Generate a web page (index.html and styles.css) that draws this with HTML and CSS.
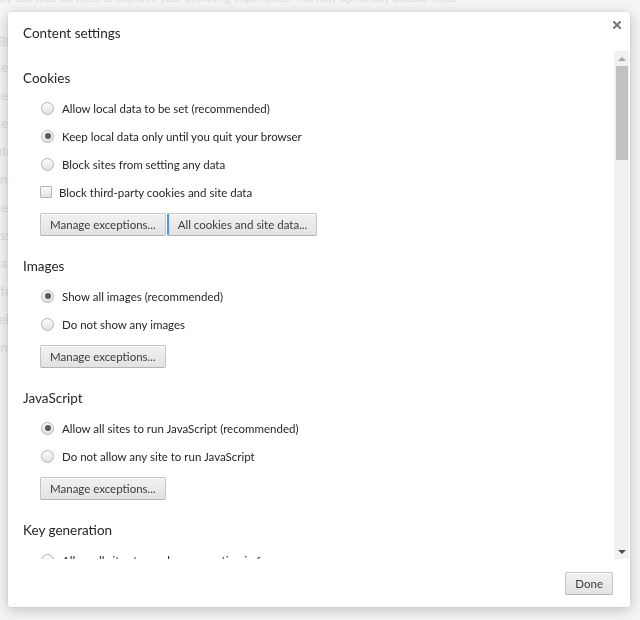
FILE: index.html
```html
<!DOCTYPE html>
<html lang="en">
<head>
  <meta charset="UTF-8" />
  <title>Content settings</title>
  <link rel="stylesheet" href="styles.css">
</head>
<body>
<!-- ========= Settings page behind the dialog ========= -->
<div class="page">
  <p class="page-top">may use web services to improve your browsing experience. You may optionally disable these</p>
  <div class="page-rows">
    <a class="page-link">Learn more</a>
    <span>Use a web service to help resolve navigation errors</span>
    <span>Use a prediction service to help complete searches</span>
    <span>Use a prediction service to load pages</span>
    <span>Automatically send some system information</span>
    <span>Send a "Do Not Track" request</span>
    <span>Use a web service to help resolve spelling errors</span>
    <span>Passwords and forms</span>
    <span>Enable Autofill to fill out web forms</span>
    <span>Offer to save your passwords</span>
    <span>Web content</span>
    <span>Font size</span>
  </div>
</div>

<!-- ========= Content settings dialog ========= -->
<div class="overlay">
  <div class="dialog">
    <div class="dialog-head">
      <h1>Content settings</h1>
      <button class="close" aria-label="Close">
        <svg width="8" height="8" viewBox="0 0 8 8"><path d="M1 1L7 7M7 1L1 7" stroke="#777" stroke-width="2" stroke-linecap="square"/></svg>
      </button>
    </div>

    <div class="dialog-body">
      <div class="content">
        <section>
          <h3>Cookies</h3>
          <label class="opt"><input type="radio" name="cookies"> Allow local data to be set (recommended)</label>
          <label class="opt"><input type="radio" name="cookies" checked> Keep local data only until you quit your browser</label>
          <label class="opt"><input type="radio" name="cookies"> Block sites from setting any data</label>
          <label class="opt check"><input type="checkbox"> Block third-party cookies and site data</label>
          <div class="btn-row">
            <button class="btn">Manage exceptions...</button>
            <button class="btn focused">All cookies and site data...</button>
          </div>
        </section>

        <section>
          <h3>Images</h3>
          <label class="opt"><input type="radio" name="images" checked> Show all images (recommended)</label>
          <label class="opt"><input type="radio" name="images"> Do not show any images</label>
          <div class="btn-row"><button class="btn">Manage exceptions...</button></div>
        </section>

        <section>
          <h3>JavaScript</h3>
          <label class="opt"><input type="radio" name="js" checked> Allow all sites to run JavaScript (recommended)</label>
          <label class="opt"><input type="radio" name="js"> Do not allow any site to run JavaScript</label>
          <div class="btn-row"><button class="btn">Manage exceptions...</button></div>
        </section>

        <section>
          <h3>Key generation</h3>
          <label class="opt"><input type="radio" name="keygen"> Allow all sites to use key generation in forms</label>
          <label class="opt"><input type="radio" name="keygen" checked> Do not allow any site to use key generation in forms</label>
        </section>
      </div>

      <div class="scrollbar">
        <span class="arrow up"></span>
        <span class="thumb"></span>
        <span class="track"></span>
        <span class="arrow down"></span>
      </div>
    </div>

    <div class="dialog-foot">
      <button class="btn">Done</button>
    </div>
  </div>
</div>
</body>
</html>
```

FILE: styles.css
```css
:root {
  --text: #262626;
  --muted: #3c3c3c;
  --border: #c4c4c4;
  --bg-page: #f5f5f5;
  --bg-faint: #dcdcdc;
  --focus: #4d90fe;
}

/* ===== Reset ===== */
*, *::before, *::after { box-sizing: border-box; }
body {
  margin: 0;
  height: 620px;
  overflow: hidden;
  font-family: Lato, "Open Sans", "Liberation Sans", sans-serif;
  font-size: 11.5px;
  color: var(--text);
  background: var(--bg-page);
}
button { font-family: inherit; cursor: pointer; }

/* ===== Page behind ===== */
.page { color: var(--bg-faint); font-size: 13px; }
.page-top { margin: -10px 0 0 -9px; white-space: nowrap; line-height: 16px; font-size: 11.5px; }
.page-rows { display: flex; flex-direction: column; gap: 12px; margin: 25px 0 0 -14px; white-space: nowrap; }
.page-rows span, .page-link { line-height: 16px; }
.page-link { text-decoration: underline; }

/* ===== Dialog ===== */
.overlay {
  position: fixed;
  inset: 0;
  display: flex;
  padding: 12px 10px 13px 8px;
}
.dialog {
  flex: 1;
  display: flex;
  flex-direction: column;
  background: #fff;
  border-radius: 3px;
  box-shadow: 0 3px 14px rgba(0,0,0,.22), 0 0 2px rgba(0,0,0,.12);
}
.dialog-head {
  display: flex;
  justify-content: space-between;
  align-items: flex-start;
  height: 39px;
  padding: 0 9px 0 15px;
}
.dialog-head h1 {
  margin: 11px 0 0;
  font-size: 13.5px;
  font-weight: normal;
  line-height: 20px;
}
.close {
  width: 8px;
  height: 8px;
  margin-top: 9px;
  padding: 0;
  border: none;
  background: none;
  display: flex;
}

.dialog-body {
  flex: 1;
  display: flex;
  min-height: 0;
}
.content {
  flex: 1;
  overflow: hidden;
  padding: 17px 0 0 15px;
}
section { margin-bottom: 20px; }
section h3 {
  margin: 0 0 6px;
  font-size: 13.5px;
  font-weight: normal;
  line-height: 20px;
}

/* radio / checkbox rows */
.opt {
  display: flex;
  align-items: center;
  height: 28px;
  padding-left: 18px;
  gap: 8px;
  white-space: nowrap;
}
.opt.check { padding-left: 17px; gap: 7px; }
.opt input {
  appearance: none;
  margin: 0;
  width: 13px;
  height: 13px;
  flex: none;
  border: 1px solid #b4b4b4;
  background: linear-gradient(#fbfbfb, #e2e2e2);
  display: grid;
  place-items: center;
}
.opt input[type="radio"] { border-radius: 50%; }
.opt input[type="checkbox"] { width: 12px; height: 12px; border-radius: 1px; }
.opt input[type="radio"]:checked::after {
  content: "";
  width: 6px;
  height: 6px;
  border-radius: 50%;
  background: #5a5a5a;
}

/* buttons */
.btn-row { display: flex; gap: 1px; margin: 7px 0 0 17px; }
.btn {
  height: 23px;
  padding: 0 9px;
  font-size: 11.5px;
  color: var(--muted);
  border: 1px solid var(--border);
  border-bottom-color: #b4b4b4;
  border-radius: 2px;
  background: linear-gradient(#f1f1f1, #e2e2e2);
  box-shadow: inset 0 1px 0 #fff;
}
.btn.focused { border-left: 2px solid var(--focus); }

/* fake scrollbar */
.scrollbar {
  width: 15px;
  margin-right: 1px;
  display: flex;
  flex-direction: column;
  align-items: center;
  background: #f1f1f1;
}
.arrow { height: 15px; width: 15px; display: flex; justify-content: center; align-items: center; flex: none; }
.arrow::before {
  content: "";
  border-left: 4px solid transparent;
  border-right: 4px solid transparent;
}
.arrow.up::before { border-bottom: 4px solid #a3a3a3; }
.arrow.down::before { border-top: 4px solid #505050; }
.thumb {
  width: 12px;
  height: 94px;
  margin-left: 1px;
  background: #c1c1c1;
  flex: none;
}
.track { flex: 1; }

.dialog-foot {
  display: flex;
  justify-content: flex-end;
  height: 48px;
  padding: 13px 17px 0 0;
}
```
